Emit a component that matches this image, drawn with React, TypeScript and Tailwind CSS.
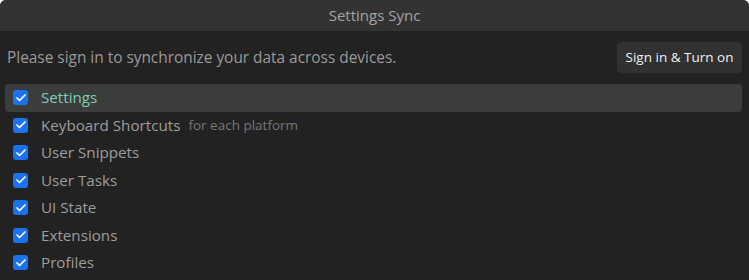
import { Check } from 'lucide-react';

const items = [
  { label: 'Settings', active: true },
  { label: 'Keyboard Shortcuts', note: 'for each platform' },
  { label: 'User Snippets' },
  { label: 'User Tasks' },
  { label: 'UI State' },
  { label: 'Extensions' },
  { label: 'Profiles' },
];

export default function App() {
  return (
    <div
      className="w-[749px] h-[280px] bg-[#222222] rounded-t-[6px] overflow-hidden flex flex-col"
      style={{ fontFamily: '"Open Sans", "Noto Sans", sans-serif' }}
    >
      <div className="h-[31px] bg-[#333333] flex items-center justify-center text-[15px] text-[#a3a3a3] shrink-0">
        Settings Sync
      </div>
      <div className="flex items-center justify-between pl-[7px] pr-[7px] h-[53px] shrink-0">
        <span className="text-[15.4px] text-[#9a9a9a]">Please sign in to synchronize your data across devices.</span>
        <button className="h-[31px] w-[125px] rounded-[4px] bg-[#313131] text-[13.5px] text-[#f0f0f0]">
          Sign in &amp; Turn on
        </button>
      </div>
      <div className="flex flex-col pl-[5px] pr-[7px]">
        {items.map((item) => (
          <div
            key={item.label}
            className={`h-[27.5px] flex items-center pl-[8px] gap-[13px] rounded-[3px] ${
              item.active ? 'bg-[#3a3d3c]' : ''
            }`}
          >
            <div className="w-[15px] h-[15px] rounded-[3px] bg-[#1b72ee] flex items-center justify-center">
              <Check className="w-[12px] h-[12px] text-white" strokeWidth={3.5} />
            </div>
            <span className={`text-[15.2px] ${item.active ? 'text-[#7fcbb7]' : 'text-[#9d9d9d]'}`}>{item.label}</span>
            {item.note && <span className="text-[13.5px] text-[#777777] -ml-[5px]">{item.note}</span>}
          </div>
        ))}
      </div>
    </div>
  );
}
